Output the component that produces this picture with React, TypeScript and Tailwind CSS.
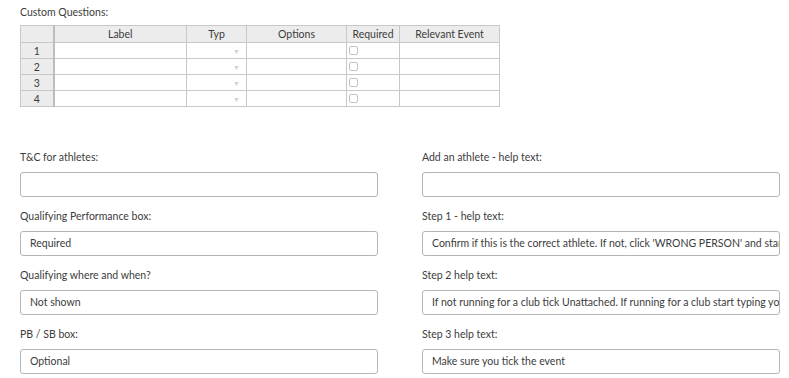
const columns = [
  { name: 'Label', w: 'w-[133px]' },
  { name: 'Typ', w: 'w-[60px]' },
  { name: 'Options', w: 'w-[100px]' },
  { name: 'Required', w: 'w-[53px]' },
  { name: 'Relevant Event', w: 'w-[100px]' },
];

const leftFields = [
  { label: 'T&C for athletes:', value: '' },
  { label: 'Qualifying Performance box:', value: 'Required' },
  { label: 'Qualifying where and when?', value: 'Not shown' },
  { label: 'PB / SB box:', value: 'Optional' },
];

const rightFields = [
  { label: 'Add an athlete - help text:', value: '' },
  {
    label: 'Step 1 - help text:',
    value: "Confirm if this is the correct athlete. If not, click 'WRONG PERSON' and start again",
  },
  {
    label: 'Step 2 help text:',
    value: 'If not running for a club tick Unattached. If running for a club start typing your club name',
  },
  { label: 'Step 3 help text:', value: 'Make sure you tick the event' },
];

function Field({ label, value }: { label: string; value: string }) {
  return (
    <div className="flex flex-col">
      <label className="h-[14px] text-[10.5px] leading-[14px]">{label}</label>
      <div className="mt-[8px] flex h-[25px] items-center overflow-hidden whitespace-nowrap rounded-[3px] border border-[#b5b5b5] bg-white pl-[9px] text-[10.5px]">
        {value}
      </div>
    </div>
  );
}

export default function App() {
  return (
    <div className="min-h-[378px] bg-white pl-[20px] pt-[5px] font-['Lato','Liberation_Sans',sans-serif] text-[#3c3c3c]">
      <p className="h-[14px] text-[10.5px] leading-[14px]">Custom Questions:</p>

      <table className="mt-[6px] table-fixed border-collapse border border-[#c8c8c8] text-[10.5px] leading-[14px]">
        <thead>
          <tr className="h-[17px] bg-[#ececec]">
            <th className="w-[33px] border border-[#c8c8c8] border-r-2 border-r-[#bdbdbd] p-0" />
            {columns.map((c) => (
              <th key={c.name} className={`${c.w} border border-[#c8c8c8] p-0 font-normal`}>
                {c.name}
              </th>
            ))}
          </tr>
        </thead>
        <tbody>
          {[1, 2, 3, 4].map((n) => (
            <tr key={n} className="h-[16px]">
              <td className="border border-[#c8c8c8] border-r-2 border-r-[#bdbdbd] bg-[#ececec] p-0 text-center">
                {n}
              </td>
              <td className="border border-[#c8c8c8] p-0" />
              <td className="border border-[#c8c8c8] p-0 pr-[6px] text-right">
                <span className="text-[7px] text-[#d0d0d0]">▼</span>
              </td>
              <td className="border border-[#c8c8c8] p-0" />
              <td className="border border-[#c8c8c8] p-0 pl-[2px]">
                <div className="h-[9px] w-[9px] rounded-[2px] border border-[#c4c4c4] bg-white" />
              </td>
              <td className="border border-[#c8c8c8] p-0" />
            </tr>
          ))}
        </tbody>
      </table>

      <div className="mt-[43px] grid grid-cols-[358px_358px] gap-x-[44px]">
        <div className="flex flex-col gap-[12px]">
          {leftFields.map((f) => (
            <Field key={f.label} {...f} />
          ))}
        </div>
        <div className="flex flex-col gap-[12px]">
          {rightFields.map((f) => (
            <Field key={f.label} {...f} />
          ))}
        </div>
      </div>
    </div>
  );
}
